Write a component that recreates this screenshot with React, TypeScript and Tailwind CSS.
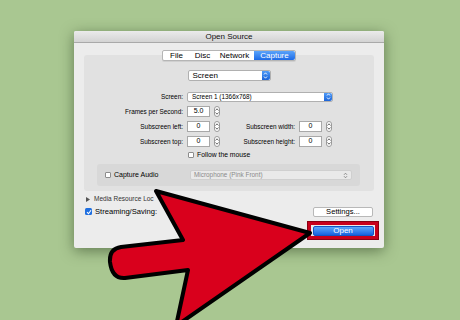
import React from 'react';

const font = { fontFamily: '"Liberation Sans", Arial, sans-serif' };

function Stepper() {
  return (
    <div className="w-[6px] h-[11px] rounded-[3px] border border-[#9a9a9a] bg-white flex flex-col items-center justify-center gap-[1px]">
      <svg width="4" height="3" viewBox="0 0 4 3"><path d="M0.5 2.5 L2 0.8 L3.5 2.5" fill="none" stroke="#444" strokeWidth="0.8" /></svg>
      <svg width="4" height="3" viewBox="0 0 4 3"><path d="M0.5 0.5 L2 2.2 L3.5 0.5" fill="none" stroke="#444" strokeWidth="0.8" /></svg>
    </div>
  );
}

function BlueArrows() {
  return (
    <div className="w-[8px] h-full rounded-r-[2px] bg-gradient-to-b from-[#4f9bf8] to-[#1c64d8] flex flex-col items-center justify-center gap-[1px]">
      <svg width="5" height="3" viewBox="0 0 5 3"><path d="M1 2.5 L2.5 0.8 L4 2.5" fill="none" stroke="#fff" strokeWidth="0.9" /></svg>
      <svg width="5" height="3" viewBox="0 0 5 3"><path d="M1 0.5 L2.5 2.2 L4 0.5" fill="none" stroke="#fff" strokeWidth="0.9" /></svg>
    </div>
  );
}

function NumField({ value }: { value: string }) {
  return (
    <div className="flex items-center gap-[4px]">
      <div className="w-[23px] h-[11px] bg-white border border-[#a8a8a8] flex items-center justify-center text-[7px] text-[#000]">
        {value}
      </div>
      <Stepper />
    </div>
  );
}

function Check({ checked }: { checked?: boolean }) {
  if (checked) {
    return (
      <div className="w-[7px] h-[7px] rounded-[1.5px] bg-[#1f6fe0] flex items-center justify-center">
        <svg width="6" height="6" viewBox="0 0 6 6"><path d="M1 3.2 L2.5 4.7 L5 1.2" fill="none" stroke="#fff" strokeWidth="1.1" /></svg>
      </div>
    );
  }
  return <div className="w-[6px] h-[6px] rounded-[1px] bg-white border border-[#8c8c8c]" />;
}

export default function App() {
  return (
    <div className="relative w-[460px] h-[320px] overflow-hidden bg-[#a9c791]" style={font}>
      <div className="pt-[31px] pl-[74px]">
        <div className="w-[310px] h-[217px] bg-[#ececec] rounded-[2px] shadow-[0_3px_14px_rgba(40,60,30,0.55)] flex flex-col">
          {/* title bar */}
          <div className="h-[12px] shrink-0 bg-gradient-to-b from-[#ebebeb] to-[#d3d3d3] border-b border-[#a9a9a9] rounded-t-[2px] flex items-center justify-center text-[8px] text-[#111]">
            Open Source
          </div>

          <div className="px-[10px] flex flex-col">
            {/* tabs */}
            <div className="relative z-10 mt-[7px] h-[11px] self-center flex rounded-[2px] border border-[#b5b5b5] bg-white text-[8px] text-[#000] shadow-[0_1px_0_rgba(0,0,0,0.08)]">
              <div className="w-[27px] flex items-center justify-center">File</div>
              <div className="w-[25px] flex items-center justify-center">Disc</div>
              <div className="w-[39px] flex items-center justify-center">Network</div>
              <div className="w-[41px] flex items-center justify-center rounded-r-[2px] bg-gradient-to-b from-[#5aa3fa] to-[#1c6ae6] text-white">Capture</div>
            </div>

            {/* panel */}
            <div className="-mt-[6px] h-[136px] bg-[#e1e1e1] rounded-[3px] flex flex-col">
              <div className="mt-[15px] self-center w-[83px] h-[11px] bg-white border border-[#b0b0b0] rounded-[2px] flex items-center text-[8px] text-[#000]">
                <span className="flex-1 pl-[4px]">Screen</span>
                <BlueArrows />
              </div>

              <div className="mt-[8px] flex flex-col text-[6.4px] text-[#000]">
                <div className="h-[15px] flex items-center">
                  <span className="w-[99px] text-right">Screen:</span>
                  <div className="ml-[4px] w-[146px] h-[10px] bg-white border border-[#b0b0b0] rounded-[2px] flex items-center">
                    <span className="flex-1 pl-[4px]">Screen 1 (1366x768)</span>
                    <BlueArrows />
                  </div>
                </div>
                <div className="h-[15px] flex items-center">
                  <span className="w-[99px] text-right">Frames per Second:</span>
                  <div className="ml-[4px]"><NumField value="5.0" /></div>
                </div>
                <div className="h-[15px] flex items-center">
                  <span className="w-[99px] text-right">Subscreen left:</span>
                  <div className="ml-[4px]"><NumField value="0" /></div>
                  <span className="w-[75px] text-right">Subscreen width:</span>
                  <div className="ml-[4px]"><NumField value="0" /></div>
                </div>
                <div className="h-[15px] flex items-center">
                  <span className="w-[99px] text-right">Subscreen top:</span>
                  <div className="ml-[4px]"><NumField value="0" /></div>
                  <span className="w-[75px] text-right">Subscreen height:</span>
                  <div className="ml-[4px]"><NumField value="0" /></div>
                </div>
                <div className="h-[12px] flex items-center pl-[104px] gap-[3px] text-[6.8px]">
                  <Check />
                  <span>Follow the mouse</span>
                </div>
              </div>

              {/* capture audio */}
              <div className="mt-[3px] ml-[13px] w-[263px] h-[22px] bg-[#d8d8d8] rounded-[3px] flex items-center text-[7px]">
                <div className="ml-[8px] flex items-center gap-[3px] w-[85px] text-[#000]">
                  <Check />
                  <span>Capture Audio</span>
                </div>
                <div className="w-[162px] h-[10px] bg-[#e9e9e9] border border-[#cfcfcf] rounded-[2px] flex items-center text-[6.4px] text-[#8a8a8a]">
                  <span className="flex-1 pl-[3px]">Microphone (Pink Front)</span>
                  <svg width="5" height="7" viewBox="0 0 5 7" className="mr-[3px]">
                    <path d="M1 2.8 L2.5 1.2 L4 2.8 M1 4.2 L2.5 5.8 L4 4.2" fill="none" stroke="#777" strokeWidth="0.8" />
                  </svg>
                </div>
              </div>
            </div>

            {/* below panel */}
            <div className="mt-[3px] h-[10px] flex items-center gap-[4px] text-[6.5px] text-[#333]">
              <svg width="4" height="5" viewBox="0 0 4 5" className="ml-[2px]"><path d="M0 0 L4 2.5 L0 5 Z" fill="#555" /></svg>
              <span>Media Resource Loc</span>
            </div>
            <div className="mt-[2px] h-[12px] flex items-center text-[7.6px] text-[#000]">
              <div className="ml-[1px] flex items-center gap-[3px]">
                <Check checked />
                <span>Streaming/Saving:</span>
              </div>
              <div className="ml-auto mr-[1px] w-[60px] h-[10px] bg-white border border-[#b8b8b8] rounded-[2px] flex items-center justify-center text-[7.6px]">
                Settings...
              </div>
            </div>
            <div className="mt-[4px] self-end -mr-[4px] w-[70px] h-[17px] border-[3px] border-[#c8001c] outline outline-1 outline-[#8a0012] flex items-center justify-center">
              <div className="w-[61px] h-[10px] rounded-[2px] bg-gradient-to-b from-[#5aa6fb] to-[#1762e0] border border-[#1356c4] flex items-center justify-center text-[8px] text-white">
                Open
              </div>
            </div>
          </div>
        </div>
      </div>

      {/* red arrow overlay */}
      <svg className="absolute inset-0 pointer-events-none" width="460" height="320" viewBox="0 0 460 320">
        <path
          d="M310 233 L156 191 L183 240 L121 247 Q109 249 110 262 Q112 279 125 278 L188 270 L176 326 Z"
          fill="#d9001c"
          stroke="#000"
          strokeWidth="4"
          strokeLinejoin="round"
        />
      </svg>
    </div>
  );
}
